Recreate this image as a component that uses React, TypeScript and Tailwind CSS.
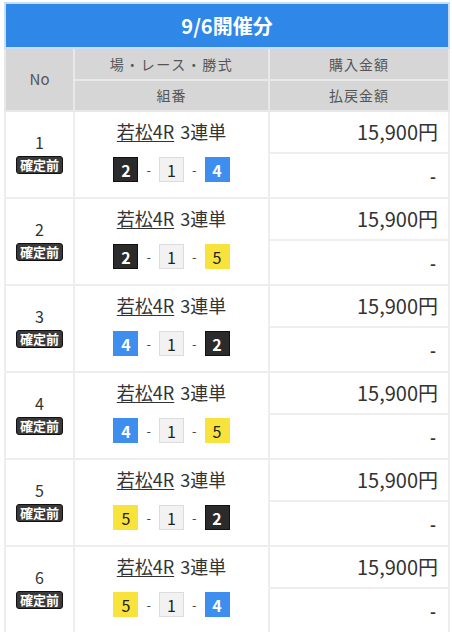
import React from "react";

type Row = {
  no: number;
  combo: number[];
};

const rows: Row[] = [
  { no: 1, combo: [2, 1, 4] },
  { no: 2, combo: [2, 1, 5] },
  { no: 3, combo: [4, 1, 2] },
  { no: 4, combo: [4, 1, 5] },
  { no: 5, combo: [5, 1, 2] },
  { no: 6, combo: [5, 1, 4] },
];

function NumBox({ n }: { n: number }) {
  if (n === 1) {
    return (
      <span className="inline-flex w-[25px] h-[25px] items-center justify-center bg-[#f2f2f2] border border-[#dcdcdc] text-[#222] text-[16px]">
        1
      </span>
    );
  }
  if (n === 2) {
    return (
      <span className="inline-flex w-[25px] h-[25px] items-center justify-center bg-[#2b2b2b] border border-[#111] text-white font-bold text-[16px]">
        2
      </span>
    );
  }
  if (n === 4) {
    return (
      <span className="inline-flex w-[25px] h-[25px] items-center justify-center bg-[#3d8eef] text-white font-bold text-[16px]">
        4
      </span>
    );
  }
  return (
    <span className="inline-flex w-[25px] h-[25px] items-center justify-center bg-[#f7e33c] text-[#222] text-[16px]">
      {n}
    </span>
  );
}

export default function App() {
  return (
    <div
      className="w-[452px] h-[632px] bg-white px-1 pt-[2px] overflow-hidden"
      style={{ fontFamily: '"Noto Sans CJK JP", "Noto Sans", sans-serif' }}
    >
      <table className="w-[444px] border-collapse table-fixed text-[#333]">
        <colgroup>
          <col className="w-[69px]" />
          <col className="w-[195px]" />
          <col className="w-[180px]" />
        </colgroup>
        <thead>
          <tr>
            <th
              colSpan={3}
              className="h-[45px] bg-[#2f87e8] border-2 border-[#c9def5] text-white text-[20px] font-bold"
            >
              9/6開催分
            </th>
          </tr>
          <tr className="bg-[#d6d6d6]">
            <th
              rowSpan={2}
              className="border-2 border-[#e8e8e8] font-normal text-[15px] text-[#555]"
            >
              No
            </th>
            <th className="h-[32px] border-2 border-[#e8e8e8] font-normal text-[14px] tracking-[1.5px] text-[#555]">
              場・レース・勝式
            </th>
            <th className="border-2 border-[#e8e8e8] font-normal text-[14px] tracking-[1px] text-[#555]">
              購入金額
            </th>
          </tr>
          <tr className="bg-[#d6d6d6]">
            <th className="h-[31px] border-2 border-[#e8e8e8] font-normal text-[14px] tracking-[1px] text-[#555]">
              組番
            </th>
            <th className="border-2 border-[#e8e8e8] font-normal text-[14px] tracking-[1px] text-[#555]">
              払戻金額
            </th>
          </tr>
        </thead>
        <tbody>
          {rows.map((r) => (
            <React.Fragment key={r.no}>
              <tr>
                <td
                  rowSpan={2}
                  className="border-2 border-[#eeeeee] text-center align-middle"
                >
                  <div className="flex flex-col items-center pb-1">
                    <span className="text-[16px] leading-5 text-[#333]">{r.no}</span>
                    <span className="mt-1 px-[3px] rounded-[3px] bg-[#3a3a3a] border border-[#111] text-white text-[13px] leading-[16px] font-bold">
                      確定前
                    </span>
                  </div>
                </td>
                <td
                  rowSpan={2}
                  className="border-2 border-[#eeeeee] text-center align-middle"
                >
                  <div className="flex flex-col items-center gap-[14px] pb-2">
                    <div className="text-[18px] leading-6 text-[#333]">
                      <span className="underline underline-offset-2">若松4R</span>
                      <span className="ml-[6px]">3連単</span>
                    </div>
                    <div className="flex items-center gap-[8px] text-[#444]">
                      <NumBox n={r.combo[0]} />
                      <span className="text-[13px]">-</span>
                      <NumBox n={r.combo[1]} />
                      <span className="text-[13px]">-</span>
                      <NumBox n={r.combo[2]} />
                    </div>
                  </div>
                </td>
                <td className="h-[42px] border-2 border-[#eeeeee] text-right pr-[10px] text-[20px] text-[#333]">
                  15,900円
                </td>
              </tr>
              <tr>
                <td className="h-[45px] border-2 border-[#eeeeee] text-right pr-[12px] text-[16px] font-bold text-[#333]">
                  -
                </td>
              </tr>
            </React.Fragment>
          ))}
        </tbody>
      </table>
    </div>
  );
}
